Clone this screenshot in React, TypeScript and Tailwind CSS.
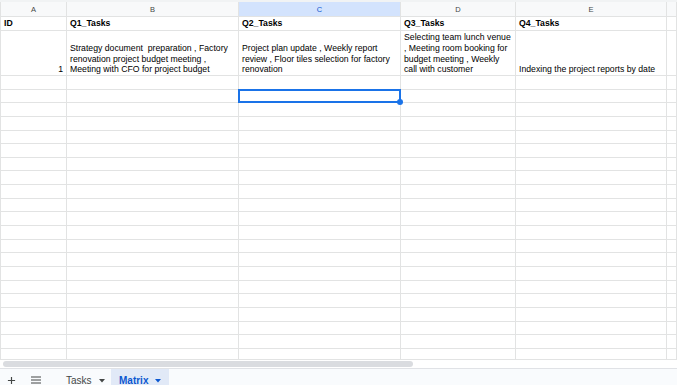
import React from 'react';

const cols = [
  { key: 'A', w: 'w-[66px]' },
  { key: 'B', w: 'w-[172px]' },
  { key: 'C', w: 'w-[162px]' },
  { key: 'D', w: 'w-[115px]' },
  { key: 'E', w: 'w-[151px]' },
  { key: 'F', w: 'flex-1' },
];

const cell = 'shrink-0 border-r border-b border-[#e2e3e3] overflow-hidden';

const HeaderRow: React.FC = () => (
  <div className="flex h-[15px] shrink-0">
    {cols.map((c) => (
      <div
        key={c.key}
        className={`${c.w} ${cell} flex items-center justify-center pt-[1px] text-[7.5px] ${
          c.key === 'C' ? 'bg-[#d3e3fd] text-[#0b57d0]' : 'bg-[#f8f9fa] text-[#444746]'
        } border-[#dadce0]`}
      >
        {c.key === 'F' ? '' : c.key}
      </div>
    ))}
  </div>
);

const EmptyRow: React.FC<{ selected?: boolean }> = ({ selected }) => (
  <div className="flex h-[13.65px] shrink-0">
    {cols.map((c) => (
      <div key={c.key} className={`${c.w} ${cell} ${c.key === 'C' && selected ? 'relative overflow-visible' : ''}`}>
        {c.key === 'C' && selected && (
          <div className="absolute -left-px -top-px -right-px -bottom-px border-2 border-[#1a73e8] z-10">
            <div className="absolute -right-[4px] -bottom-[4px] w-[6px] h-[6px] rounded-full bg-[#1a73e8]" />
          </div>
        )}
      </div>
    ))}
  </div>
);

export default function App() {
  const bottomText = 'flex flex-col justify-end px-[3px] pb-0 leading-[10.7px] whitespace-pre';
  const headCell = 'flex items-end px-[3px] pb-[1px] leading-[11px]';
  return (
    <div
      className="w-[677px] h-[385px] overflow-hidden bg-white flex flex-col text-[8.7px] text-black"
      style={{ fontFamily: '"Liberation Sans", Arial, sans-serif' }}
    >
      <div className="h-[2px] bg-[#f1f3f4] shrink-0" />
      <div className="h-[357px] overflow-hidden flex flex-col shrink-0 border-l border-[#e2e3e3]">
        <HeaderRow />
        <div className="flex h-[14px] shrink-0 font-bold">
          <div className={`w-[66px] ${cell} ${headCell}`}>ID</div>
          <div className={`w-[172px] ${cell} ${headCell}`}>Q1_Tasks</div>
          <div className={`w-[162px] ${cell} ${headCell}`}>Q2_Tasks</div>
          <div className={`w-[115px] ${cell} ${headCell}`}>Q3_Tasks</div>
          <div className={`w-[151px] ${cell} ${headCell}`}>Q4_Tasks</div>
          <div className={`flex-1 ${cell}`} />
        </div>
        <div className="flex h-[45px] shrink-0">
          <div className={`w-[66px] ${cell} ${bottomText} items-end`}>1</div>
          <div className={`w-[172px] ${cell} ${bottomText}`}>
            <span>Strategy document  preparation , Factory</span>
            <span>renovation project budget meeting ,</span>
            <span>Meeting with CFO for project budget</span>
          </div>
          <div className={`w-[162px] ${cell} ${bottomText}`}>
            <span>Project plan update , Weekly report</span>
            <span>review , Floor tiles selection for factory</span>
            <span>renovation</span>
          </div>
          <div className={`w-[115px] ${cell} ${bottomText}`}>
            <span>Selecting team lunch venue</span>
            <span>, Meeting room booking for</span>
            <span>budget meeting , Weekly</span>
            <span>call with customer</span>
          </div>
          <div className={`w-[151px] ${cell} ${bottomText}`}>
            <span>Indexing the project reports by date</span>
          </div>
          <div className={`flex-1 ${cell}`} />
        </div>
        {Array.from({ length: 22 }).map((_, i) => (
          <EmptyRow key={i} selected={i === 1} />
        ))}
      </div>
      <div className="h-[9px] shrink-0 border-t border-[#e2e3e3] flex items-center px-[3px]">
        <div className="w-[410px] h-[6px] rounded-full bg-[#dadce0]" />
      </div>
      <div className="flex-1 border-t border-[#e0e2e6] bg-[#f9fbfd] flex items-stretch text-[10px] text-[#444746]">
        <div className="w-[23px] flex items-center justify-center pt-[3px]">
          <svg width="9" height="9" viewBox="0 0 10 10">
            <path d="M5 1v8M1 5h8" stroke="#444746" strokeWidth="1.3" />
          </svg>
        </div>
        <div className="w-[26px] flex items-center justify-center pt-[3px]">
          <svg width="10" height="8" viewBox="0 0 10 8">
            <path d="M0 1h10M0 4h10M0 7h10" stroke="#444746" strokeWidth="1.2" />
          </svg>
        </div>
        <div className="w-[62px] flex items-center pl-[17px] gap-[7px] pt-[4px]">
          <span>Tasks</span>
          <svg width="6" height="4" viewBox="0 0 6 4">
            <path d="M0 0h6L3 3.5z" fill="#444746" />
          </svg>
        </div>
        <div className="w-[58px] bg-[#e1e9f7] flex items-center pl-[8px] gap-[7px] pt-[4px] text-[#0b57d0] font-bold">
          <span>Matrix</span>
          <svg width="6" height="4" viewBox="0 0 6 4">
            <path d="M0 0h6L3 3.5z" fill="#0b57d0" />
          </svg>
        </div>
      </div>
    </div>
  );
}
